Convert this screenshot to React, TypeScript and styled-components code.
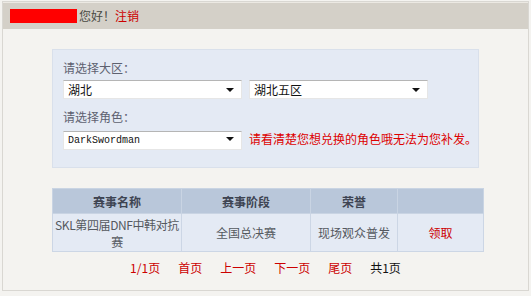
import { createGlobalStyle } from 'styled-components';
import styled from 'styled-components';

const GlobalStyle = createGlobalStyle`
  html, body {
    margin: 0;
    padding: 0;
    background: #f4f3f0;
  }
  body {
    font-family: "Noto Sans CJK SC", "DejaVu Sans", sans-serif;
    font-size: 12px;
    color: #333;
  }
`;

const Frame = styled.div`
  box-sizing: border-box;
  margin: 1px 0 0 2px;
  width: 527px;
  height: 290px;
  border: 1px solid #d9d7d2;
  background: #f4f3f0;
`;

const TopBar = styled.div`
  display: flex;
  align-items: center;
  height: 26px;
  padding-left: 7px;
  background: #d4d0c8;
  border-top: 1px solid #ece9e3;
`;

const NameMask = styled.span`
  display: inline-block;
  width: 67px;
  height: 14px;
  background: #ff0000;
  margin-right: 2px;
`;

const Greeting = styled.span`
  color: #4a4a44;
  line-height: 16px;
`;

const Logout = styled.a`
  color: #cc0000;
  text-decoration: none;
  line-height: 16px;
`;

const Content = styled.div`
  padding: 20px 0 0 49px;
`;

const Panel = styled.div`
  box-sizing: border-box;
  width: 427px;
  height: 119px;
  padding: 10px 0 0 10px;
  background: #e4eaf4;
  border: 1px solid #d9e0eb;
`;

const Label = styled.div`
  color: #5d6170;
  line-height: 16px;
  height: 16px;
  margin-bottom: 4px;
`;

const Row = styled.div`
  display: flex;
  align-items: center;
  gap: 7px;
  margin-bottom: 10px;
`;

const SelectBox = styled.div`
  position: relative;
  width: 179px;
  height: 19px;
`;

const Select = styled.select<{ $mono?: boolean }>`
  appearance: none;
  box-sizing: border-box;
  width: 100%;
  height: 100%;
  margin: 0;
  padding: 0 16px 0 4px;
  background: #fff;
  border: 1px solid #e6e6e6;
  border-top-color: #b5b5b5;
  border-radius: 0;
  outline: none;
  color: #111;
  font-family: ${(p) =>
    p.$mono ? '"Liberation Mono", monospace' : '"Noto Sans CJK SC", sans-serif'};
  font-size: ${(p) => (p.$mono ? '10px' : '12px')};
`;

const Arrow = styled.span`
  position: absolute;
  right: 8px;
  top: 8px;
  width: 0;
  height: 0;
  border-left: 4px solid transparent;
  border-right: 4px solid transparent;
  border-top: 4px solid #111;
  pointer-events: none;
`;

const Warning = styled.span`
  color: #dd0000;
  line-height: 16px;
`;

const Table = styled.table`
  margin-top: 20px;
  width: 427px;
  border-collapse: collapse;
  table-layout: fixed;
`;

const Th = styled.th<{ $w: number }>`
  width: ${(p) => p.$w}px;
  height: 24px;
  padding: 0;
  background: #b9c7da;
  border: 1px solid #c9d4e3;
  color: #3e4452;
  font-weight: bold;
  font-size: 12px;
  text-align: center;
`;

const Td = styled.td<{ $red?: boolean }>`
  height: 37px;
  padding: 0;
  background: #e4eaf4;
  border: 1px solid #ccd6e5;
  color: ${(p) => (p.$red ? '#cc0000' : '#55595f')};
  text-align: center;
  line-height: 17px;
`;

const Line = styled.span`
  display: block;
  white-space: nowrap;
  letter-spacing: -0.4px;
`;

const Pager = styled.div`
  display: flex;
  justify-content: center;
  gap: 18px;
  width: 427px;
  margin-top: 8px;
  line-height: 16px;
`;

const PageLink = styled.a<{ $plain?: boolean }>`
  color: ${(p) => (p.$plain ? '#111' : '#cc0000')};
  text-decoration: none;
`;

const Dropdown = ({ value, mono }: { value: string; mono?: boolean }) => (
  <SelectBox>
    <Select $mono={mono} defaultValue={value}>
      <option>{value}</option>
    </Select>
    <Arrow />
  </SelectBox>
);

export default function App() {
  return (
    <>
      <GlobalStyle />
      <Frame>
        <TopBar>
          <NameMask />
          <Greeting>您好！</Greeting>
          <Logout href="#">注销</Logout>
        </TopBar>
        <Content>
          <Panel>
            <Label>请选择大区：</Label>
            <Row>
              <Dropdown value="湖北" />
              <Dropdown value="湖北五区" />
            </Row>
            <Label>请选择角色：</Label>
            <Row>
              <Dropdown value="DarkSwordman" mono />
              <Warning>请看清楚您想兑换的角色哦无法为您补发。</Warning>
            </Row>
          </Panel>
          <Table>
            <thead>
              <tr>
                <Th $w={128}>赛事名称</Th>
                <Th $w={128}>赛事阶段</Th>
                <Th $w={86}>荣誉</Th>
                <Th $w={85}></Th>
              </tr>
            </thead>
            <tbody>
              <tr>
                <Td>
                  <Line>SKL第四届DNF中韩对抗</Line>
                  <Line>赛</Line>
                </Td>
                <Td>全国总决赛</Td>
                <Td>现场观众普发</Td>
                <Td $red>领取</Td>
              </tr>
            </tbody>
          </Table>
          <Pager>
            <PageLink as="span">1/1页</PageLink>
            <PageLink href="#">首页</PageLink>
            <PageLink href="#">上一页</PageLink>
            <PageLink href="#">下一页</PageLink>
            <PageLink href="#">尾页</PageLink>
            <PageLink as="span" $plain>共1页</PageLink>
          </Pager>
        </Content>
      </Frame>
    </>
  );
}
